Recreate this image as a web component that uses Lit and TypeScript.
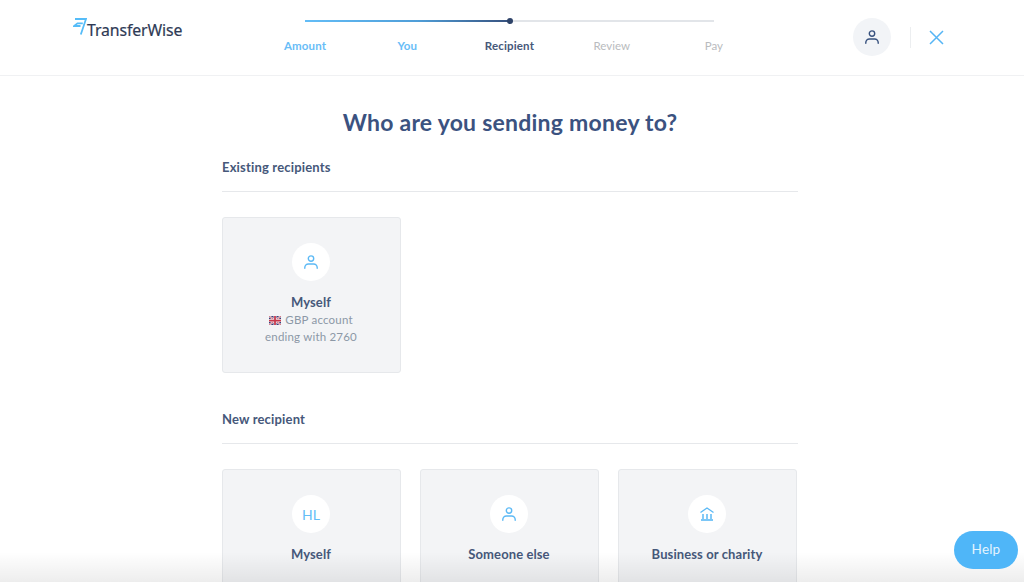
import { LitElement, html, css, svg } from "lit";
import { customElement } from "lit/decorators.js";

const person = (color: string) => html`<svg class="person" width="16" height="16" viewBox="0 0 16 16" fill="none" stroke=${color} stroke-width="1.4" stroke-linecap="round"><circle cx="8" cy="4.6" r="2.7"/><path d="M1.8 14.200v-.6c0-2.200 1.600-3.600 3.600-3.600h5.200c2 0 3.600 1.400 3.600 3.600v.6"/></svg>`;
const bank = html`<svg width="16" height="16" viewBox="0 0 16 16" fill="none" stroke="#5cb9f5"><path d="M1.500 6.500 8 2l6.500 4.500" stroke-width="1.300"/><path d="M4 8v5M8 8v5M12 8v5" stroke-width="1.500"/><path d="M2 14h12" stroke-width="1.600"/></svg>`;
const flag = svg`<rect width="24" height="18" rx="2" fill="#3b3f78"/><path d="M0 0l24 18M24 0L0 18" stroke="#efe6ea" stroke-width="4"/><path d="M0 0l24 18M24 0L0 18" stroke="#c8475a" stroke-width="1.500"/><path d="M12 0v18M0 9h24" stroke="#efe6ea" stroke-width="6"/><path d="M12 0v18M0 9h24" stroke="#c8374a" stroke-width="3.500"/>`;

@customElement("app-root")
export class AppRoot extends LitElement {
  static styles = css`
    :host { display: block; position: relative; height: 582px; overflow: hidden; background: #fff; font-family: Lato, "Noto Sans", sans-serif; color: #37517e; }
    header { display: flex; height: 75px; padding-left: 73px; border-bottom: 1px solid #f0f1f3; box-sizing: content-box; }
    .logo { width: 181px; display: flex; align-items: flex-start; padding-top: 18px; box-sizing: border-box; }
    .logo span { font-family: "Noto Sans", sans-serif; font-size: 15.8px; line-height: 21px; color: #2e3a55; margin-top: 2px; letter-spacing: -0.1px; -webkit-text-stroke: 0.2px #2e3a55; }
    .logo svg { flex: none; }
    .steps { width: 511px; padding-top: 20px; }
    .track { position: relative; height: 2px; margin: 0 51px; background: #e2e5e9; }
    .fill { position: absolute; left: 0; top: 0; height: 2px; width: 50%; background: linear-gradient(90deg, #63bdf7 0%, #4f9ed8 55%, #37517e 100%); }
    .dot { position: absolute; left: 50%; top: -2px; width: 6px; height: 6px; margin-left: -2.5px; border-radius: 50%; background: #2e4369; }
    .labels { display: grid; grid-template-columns: repeat(5, 1fr); margin-top: 16px; font-size: 11.5px; font-weight: 700; line-height: 16px; text-align: center; letter-spacing: 0.15px; }
    .done { color: #68bdf7; }
    .now { color: #46587a; }
    .todo { color: #b9bbbe; font-weight: 400; letter-spacing: 0; }
    .avatar { width: 38px; height: 38px; margin: 18px 0 0 88px; border-radius: 50%; background: #f2f4f7; display: flex; align-items: center; justify-content: center; }
    .sep { width: 1px; height: 21px; margin: 27px 0 0 19px; background: #eceef0; }
    .close { margin: 30px 0 0 18px; width: 15px; height: 15px; }
    main { width: 576px; margin: 0 auto; transform: translateX(-2px); padding-top: 30px; }
    h1 { margin: 0; text-align: center; font-size: 23px; line-height: 32px; font-weight: 700; color: #3b5280; letter-spacing: 0.24px; }
    h2 { margin: 0; font-size: 13px; line-height: 18px; font-weight: 700; color: #46587a; letter-spacing: 0.17px; padding-bottom: 15px; border-bottom: 1px solid #e6e8eb; }
    .first { margin-top: 20px; }
    .next { margin-top: 37px; }
    .cards { display: grid; grid-template-columns: repeat(3, 179px); gap: 19px; margin-top: 25px; }
    .card { height: 156px; box-sizing: border-box; background: #f3f4f6; border: 1px solid #e6e8eb; border-radius: 3px; display: flex; flex-direction: column; align-items: center; padding: 25px 1px 0 0; text-align: center; }
    .circle { width: 38px; height: 38px; border-radius: 50%; background: #fff; display: flex; align-items: center; justify-content: center; color: #63bdf7; font-size: 14px; }
    .name { margin-top: 12px; font-size: 13px; line-height: 18px; font-weight: 700; color: #46587a; letter-spacing: 0.1px; }
    .sub { font-size: 11.5px; line-height: 17px; color: #8c98a6; letter-spacing: 0.2px; }
    .sub svg { vertical-align: -1px; margin-right: 1px; }
    .shade { position: absolute; left: 0; right: 0; bottom: 0; height: 30px; background: linear-gradient(rgba(0,0,0,0), rgba(0,0,0,0.07)); pointer-events: none; }
    .help { position: absolute; left: 954px; top: 531px; width: 64px; height: 38px; border: none; border-radius: 19px; background: #4fb6f8; color: #e4f4fe; font: 400 13.5px Lato, sans-serif; letter-spacing: 0.2px; padding: 0 0 2px; }
  `;

  render() {
    return html`
      <header>
        <div class="logo">
          <svg width="14" height="17" viewBox="0 0 14 17" fill="none" stroke="#55bcf8" stroke-width="1.800">
            <path d="M2 1H13L7.800 16.500"/><path d="M9.800 5.300 H4.500 L1 8 H7.500"/>
          </svg>
          <span>TransferWise</span>
        </div>
        <div class="steps">
          <div class="track"><div class="fill"></div><div class="dot"></div></div>
          <div class="labels">
            <span class="done">Amount</span><span class="done">You</span><span class="now">Recipient</span><span class="todo">Review</span><span class="todo">Pay</span>
          </div>
        </div>
        <div class="avatar">${person("#37517e")}</div>
        <div class="sep"></div>
        <svg class="close" viewBox="0 0 15 15" fill="none" stroke="#55b5f5" stroke-width="1.500"><path d="M1 1l13 13M14 1L1 14"/></svg>
      </header>
      <main>
        <h1>Who are you sending money to?</h1>
        <h2 class="first">Existing recipients</h2>
        <div class="cards">
          <div class="card">
            <div class="circle">${person("#5cb9f5")}</div>
            <div class="name">Myself</div>
            <div class="sub"><svg width="12" height="9" viewBox="0 0 24 18">${flag}</svg> GBP account<br />ending with 2760</div>
          </div>
        </div>
        <h2 class="next">New recipient</h2>
        <div class="cards">
          <div class="card"><div class="circle">HL</div><div class="name">Myself</div></div>
          <div class="card"><div class="circle">${person("#5cb9f5")}</div><div class="name">Someone else</div></div>
          <div class="card"><div class="circle">${bank}</div><div class="name">Business or charity</div></div>
        </div>
      </main>
      <div class="shade"></div>
      <button class="help">Help</button>
    `;
  }
}
